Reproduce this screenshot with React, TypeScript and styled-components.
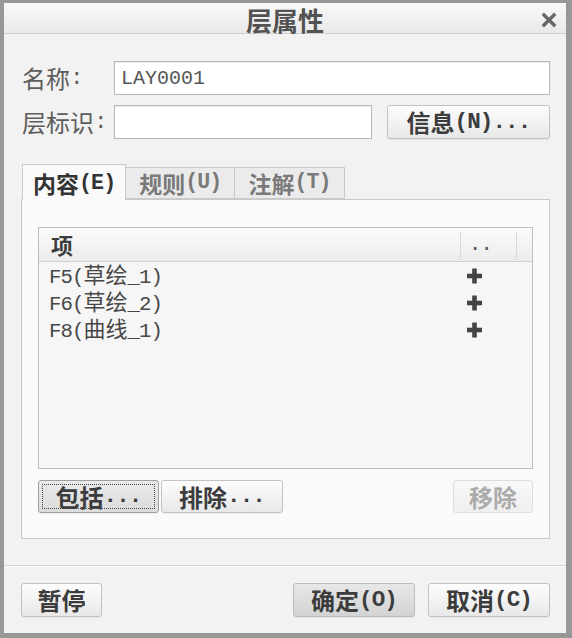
import React from "react";
import styled, { createGlobalStyle, css } from "styled-components";

const CJK = `"Noto Sans CJK SC", "Liberation Sans", sans-serif`;

const GlobalStyle = createGlobalStyle`
  html, body { margin: 0; padding: 0; background: #f2f2f2; }
  body { font-family: ${CJK}; }
  * { box-sizing: border-box; }
`;

const Lat = styled.span`
  font-family: "Liberation Mono", monospace;
  font-size: 0.94em;
  letter-spacing: -0.9px;
  line-height: 1;
`;

function Mixed({ text }: { text: string }) {
  const parts = text.split(/([\x00-\xff]+)/).filter(Boolean);
  return (
    <>
      {parts.map((p, i) =>
        /^[\x00-\xff]+$/.test(p) ? <Lat key={i}>{p}</Lat> : <React.Fragment key={i}>{p}</React.Fragment>
      )}
    </>
  );
}

const Dialog = styled.div`
  width: 572px;
  height: 638px;
  display: flex;
  flex-direction: column;
  background: #f2f2f2;
  border-style: solid;
  border-color: #979797;
  border-width: 3px 6px 5px 4px;
  font-family: ${CJK};
`;

const TitleBar = styled.div`
  height: 31px;
  flex: none;
  display: grid;
  grid-template-columns: 1fr auto 1fr;
  align-items: center;
  padding-top: 3px;
  background: linear-gradient(#f8f8f8, #e9e9e9);
  border-bottom: 1px solid #cfcfcf;
`;

const Title = styled.div`
  grid-column: 2;
  font-size: 26px;
  font-weight: 700;
  color: #525252;
  line-height: 28px;
`;

const Close = styled.div`
  grid-column: 3;
  justify-self: end;
  display: flex;
  padding-right: 9px;
`;

const Main = styled.div`
  padding: 27px 16px 0 17px;
  display: flex;
  flex-direction: column;
`;

const Form = styled.div`
  display: grid;
  grid-template-columns: 93px 1fr;
  grid-auto-rows: 34px;
  row-gap: 10px;
`;

const Label = styled.div`
  height: 34px;
  display: flex;
  align-items: center;
  font-size: 24px;
  line-height: 1;
  color: #5d5d5d;
  padding-left: 1px;
  white-space: pre;
`;

const FieldRow = styled.div`
  display: flex;
  gap: 15px;
  height: 34px;
`;

const TextInput = styled.input<{ $w?: number }>`
  height: 34px;
  width: ${(p) => (p.$w ? `${p.$w}px` : "100%")};
  flex: ${(p) => (p.$w ? "none" : "1")};
  border: 1px solid #b7b7b7;
  background: #fff;
  box-shadow: inset 0 1px 1px rgba(0, 0, 0, 0.07);
  padding: 0 6px;
  font-family: "Liberation Mono", monospace;
  font-size: 20px;
  color: #555;
  outline: none;
`;

type BtnKind = "normal" | "default" | "focus" | "disabled";

const Button = styled.button<{ $kind?: BtnKind; $w?: number; $h?: number }>`
  position: relative;
  height: ${(p) => p.$h ?? 34}px;
  width: ${(p) => (p.$w ? `${p.$w}px` : "auto")};
  flex: ${(p) => (p.$w ? "none" : "1")};
  display: flex;
  align-items: center;
  justify-content: center;
  white-space: pre;
  padding: 0;
  border: 1px solid #c2c2c2;
  border-radius: 3px;
  background: linear-gradient(#fdfdfd, #e8e8e8);
  font-family: ${CJK};
  font-size: 24px;
  font-weight: 700;
  line-height: 1;
  color: #3c3c3c;
  box-shadow: 0 1px 0 rgba(0, 0, 0, 0.05);
  ${(p) =>
    p.$kind === "default" &&
    css`
      background: linear-gradient(#e7e7e7, #d3d3d3);
      border-color: #bcbcbc;
    `}
  ${(p) =>
    p.$kind === "focus" &&
    css`
      background: linear-gradient(#e9e9e9, #dcdcdc);
      border-color: #9f9f9f;
      &::after {
        content: "";
        position: absolute;
        inset: 3px;
        border: 1px dotted #444;
      }
    `}
  ${(p) =>
    p.$kind === "disabled" &&
    css`
      color: #ababab;
      background: linear-gradient(#f8f8f8, #efefef);
      border-color: #dddddd;
      box-shadow: none;
    `}
`;

const TabStrip = styled.div`
  display: flex;
  align-items: flex-end;
  height: 35px;
  margin-top: 25px;
  padding-left: 1px;
`;

const Tab = styled.div<{ $active?: boolean }>`
  height: ${(p) => (p.$active ? 36 : 32)}px;
  padding: ${(p) => (p.$active ? "2px 10px 0" : "0 13px 0")};
  margin-bottom: ${(p) => (p.$active ? -1 : 0)}px;
  margin-left: ${(p) => (p.$active ? 0 : -1)}px;
  display: flex;
  align-items: center;
  white-space: pre;
  border: 1px solid #c9c9c9;
  border-bottom: ${(p) => (p.$active ? "none" : "1px solid #c9c9c9")};
  background: ${(p) => (p.$active ? "#fafafa" : "#ebebeb")};
  font-size: 23px;
  line-height: 1;
  font-weight: 700;
  color: ${(p) => (p.$active ? "#333" : "#7a7a7a")};
  z-index: ${(p) => (p.$active ? 1 : 0)};
  &:first-child {
    margin-left: 0;
  }
`;

const Panel = styled.div`
  height: 340px;
  border: 1px solid #c9c9c9;
  background: #fafafa;
  padding: 27px 16px 0 16px;
  display: flex;
  flex-direction: column;
`;

const List = styled.div`
  height: 242px;
  flex: none;
  border: 1px solid #bdbdbd;
  background: #f6f6f6;
  display: flex;
  flex-direction: column;
`;

const Cols = css`
  display: grid;
  grid-template-columns: 1fr 56px 16px;
`;

const ListHeader = styled.div`
  ${Cols};
  height: 34px;
  flex: none;
  border-bottom: 1px solid #cfcfcf;
  background: linear-gradient(#fbfbfb, #ececec);
`;

const HeadCell = styled.div<{ $sep?: boolean }>`
  display: flex;
  align-items: flex-end;
  padding-bottom: 6px;
  font-size: 22px;
  font-weight: 700;
  color: #3d3d3d;
  line-height: 1;
  ${(p) =>
    p.$sep
      ? css`
          border-left: 1px solid #d8d8d8;
          margin: 4px 0 1px;
          padding-left: 8px;
          padding-bottom: 4px;
          font-weight: 400;
          color: #555;
        `
      : css`
          padding-left: 12px;
        `}
`;

const Row = styled.div`
  ${Cols};
  height: 27px;
  flex: none;
  align-items: center;
`;

const RowText = styled.div`
  padding-left: 10px;
  font-size: 22px;
  color: #474747;
  line-height: 1;
  white-space: pre;
`;

const RowMark = styled.div`
  display: flex;
  padding-left: 7px;
`;

const PanelButtons = styled.div`
  display: flex;
  align-items: center;
  gap: 2px;
  margin-top: 11px;
`;

const Spacer = styled.div`
  flex: 1;
`;

const Footer = styled.div`
  margin-top: auto;
  border-top: 1px solid #d3d3d3;
  box-shadow: inset 0 1px 0 #fbfbfb;
  padding: 17px 16px 16px 17px;
  display: flex;
  align-items: center;
  gap: 13px;
`;

const Plus = () => (
  <svg width="15" height="16" viewBox="0 0 15 16">
    <rect x="5.2" y="0.5" width="4.6" height="15" fill="#444" />
    <rect x="0" y="5.7" width="15" height="4.6" fill="#444" />
  </svg>
);

const CloseIcon = () => (
  <svg width="16" height="16" viewBox="0 0 16 16">
    <path d="M3 3 L13 13 M13 3 L3 13" stroke="#676767" strokeWidth="3.4" strokeLinecap="square" />
  </svg>
);

const items = ["F5(草绘_1)", "F6(草绘_2)", "F8(曲线_1)"];

export default function App() {
  return (
    <>
      <GlobalStyle />
      <Dialog>
        <TitleBar>
          <Title>层属性</Title>
          <Close>
            <CloseIcon />
          </Close>
        </TitleBar>
        <Main>
          <Form>
            <Label>
              <Mixed text="名称:" />
            </Label>
            <FieldRow>
              <TextInput defaultValue="LAY0001" readOnly />
            </FieldRow>
            <Label>
              <Mixed text="层标识:" />
            </Label>
            <FieldRow>
              <TextInput $w={258} readOnly />
              <Button>
                <Mixed text="信息(N)..." />
              </Button>
            </FieldRow>
          </Form>
          <TabStrip>
            <Tab $active>
              <Mixed text="内容(E)" />
            </Tab>
            <Tab>
              <Mixed text="规则(U)" />
            </Tab>
            <Tab>
              <Mixed text="注解(T)" />
            </Tab>
          </TabStrip>
          <Panel>
            <List>
              <ListHeader>
                <HeadCell>项</HeadCell>
                <HeadCell $sep>
                  <Lat>..</Lat>
                </HeadCell>
                <HeadCell $sep />
              </ListHeader>
              {items.map((t) => (
                <Row key={t}>
                  <RowText>
                    <Mixed text={t} />
                  </RowText>
                  <RowMark>
                    <Plus />
                  </RowMark>
                  <span />
                </Row>
              ))}
            </List>
            <PanelButtons>
              <Button $kind="focus" $w={121} $h={33}>
                <Mixed text="包括..." />
              </Button>
              <Button $w={122} $h={33}>
                <Mixed text="排除..." />
              </Button>
              <Spacer />
              <Button $kind="disabled" $w={80} $h={33}>
                移除
              </Button>
            </PanelButtons>
          </Panel>
        </Main>
        <Footer>
          <Button $w={81}>暂停</Button>
          <Spacer />
          <Button $kind="default" $w={122}>
            <Mixed text="确定(O)" />
          </Button>
          <Button $w={122}>
            <Mixed text="取消(C)" />
          </Button>
        </Footer>
      </Dialog>
    </>
  );
}
